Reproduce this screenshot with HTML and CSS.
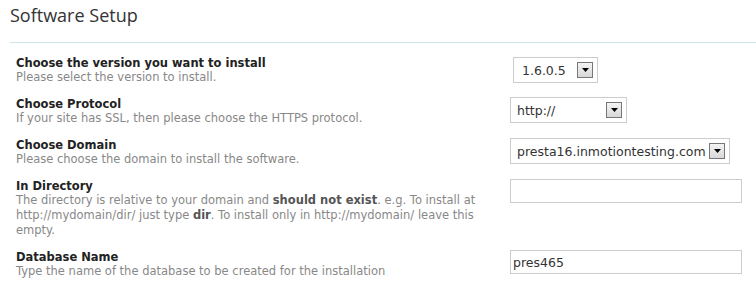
FILE: index.html
```html
<!DOCTYPE html>
<html lang="en">
<head>
  <meta charset="UTF-8">
  <title>Software Setup</title>
  <link rel="stylesheet" href="styles.css">
</head>
<body>
<div class="setup">
  <div class="setup-head">
    <h1>Software Setup</h1>
  </div>

  <div class="setup-form">
    <!-- Version -->
    <div class="row">
      <div class="row-text">
        <div class="label">Choose the version you want to install</div>
        <div class="desc">Please select the version to install.</div>
      </div>
      <div class="row-field">
        <div class="select select-version">
          <span class="select-value">1.6.0.5</span>
          <span class="select-btn"><svg width="7" height="4" viewBox="0 0 7 4"><path d="M0 0h7L3.5 4z" fill="#000"/></svg></span>
        </div>
      </div>
    </div>

    <!-- Protocol -->
    <div class="row">
      <div class="row-text">
        <div class="label">Choose Protocol</div>
        <div class="desc">If your site has SSL, then please choose the HTTPS protocol.</div>
      </div>
      <div class="row-field">
        <div class="select select-protocol">
          <span class="select-value">http://</span>
          <span class="select-btn"><svg width="7" height="4" viewBox="0 0 7 4"><path d="M0 0h7L3.5 4z" fill="#000"/></svg></span>
        </div>
      </div>
    </div>

    <!-- Domain -->
    <div class="row">
      <div class="row-text">
        <div class="label">Choose Domain</div>
        <div class="desc">Please choose the domain to install the software.</div>
      </div>
      <div class="row-field">
        <div class="select select-domain">
          <span class="select-value">presta16.inmotiontesting.com</span>
          <span class="select-btn"><svg width="7" height="4" viewBox="0 0 7 4"><path d="M0 0h7L3.5 4z" fill="#000"/></svg></span>
        </div>
      </div>
    </div>

    <!-- Directory -->
    <div class="row">
      <div class="row-text">
        <div class="label">In Directory</div>
        <div class="desc">The directory is relative to your domain and <b>should not exist</b>. e.g. To install at http://mydomain/dir/ just type <b>dir</b>. To install only in http://mydomain/ leave this empty.</div>
      </div>
      <div class="row-field">
        <input class="text-input" type="text" value="">
      </div>
    </div>

    <!-- Database -->
    <div class="row">
      <div class="row-text">
        <div class="label">Database Name</div>
        <div class="desc">Type the name of the database to be created for the installation</div>
      </div>
      <div class="row-field">
        <input class="text-input" type="text" value="pres465">
      </div>
    </div>
  </div>
</div>
</body>
</html>
```

FILE: styles.css
```css
body {
  margin: 0;
  background: #fff;
  font-family: "DejaVu Sans", Verdana, sans-serif;
  overflow: hidden;
}

.setup-head {
  margin-left: 10px;
  padding-top: 2px;
  padding-bottom: 14px;
  border-bottom: 1px solid #cfe3ea;
}
.setup-head h1 {
  margin: 0;
  font-family: "Open Sans", sans-serif;
  font-weight: normal;
  font-size: 18px;
  line-height: 26px;
  color: #333;
}

.setup-form {
  padding: 13px 0 0 16px;
}

.row {
  display: flex;
  align-items: flex-start;
  margin-bottom: 12px;
}
.row-text {
  width: 480px;
}
.row-field {
  margin-left: 14px;
}

.label {
  font-size: 11.5px;
  font-weight: bold;
  line-height: 14px;
  color: #222;
}
.desc {
  font-size: 11.5px;
  line-height: 15px;
  color: #888;
}
.desc b {
  color: #555;
}

.select {
  display: flex;
  align-items: center;
  height: 24px;
  border: 1px solid #ccc;
  background: #fff;
}
.select-value {
  flex: 1;
  font-size: 12.5px;
  color: #333;
  white-space: nowrap;
}
.select-btn {
  width: 14px;
  height: 14px;
  border: 1px solid #777;
  background: linear-gradient(#f4f4f4, #d8d8d8);
  display: flex;
  align-items: center;
  justify-content: center;
  margin-right: 4px;
}
.select-version {
  width: 83px;
  margin-left: 3px;
  margin-top: 1px;
}
.select-version .select-value { padding-left: 8px; }
.select-protocol { width: 115px; }
.select-protocol .select-value { padding-left: 6px; }
.select-domain { width: 218px; }
.select-domain .select-value { padding-left: 6px; }

.text-input {
  display: block;
  width: 232px;
  height: 24px;
  box-sizing: border-box;
  margin: 0;
  border: 1px solid #ccc;
  padding: 0 2px;
  font-family: "DejaVu Sans", Verdana, sans-serif;
  font-size: 12.5px;
  color: #333;
  outline: none;
}
```
